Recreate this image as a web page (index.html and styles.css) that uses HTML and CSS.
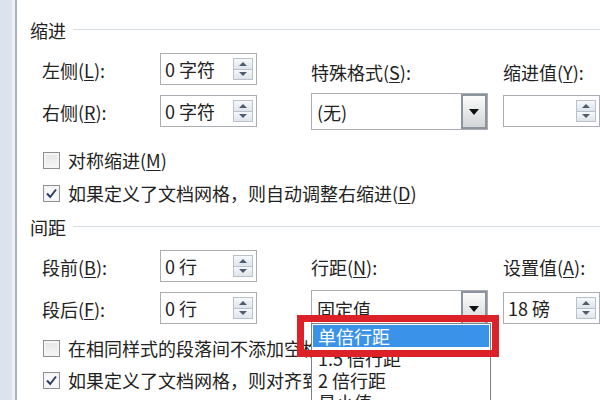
FILE: index.html
```html
<!DOCTYPE html>
<html lang="zh-CN">
<head>
<meta charset="utf-8">
<title>段落</title>
<link rel="stylesheet" href="styles.css">
</head>
<body>
<div class="window">
  <div class="edge"></div>
  <div class="content">
    <section class="group">
      <div class="group-title"><span>缩进</span><i class="rule"></i></div>
      <div class="fields">
        <label class="lbl c1">左侧(<u>L</u>):</label>
        <div class="spin c2"><span class="val">0 字符</span><span class="arrows"><b class="up"></b><b class="down"></b></span></div>
        <label class="lbl c4 top">特殊格式(<u>S</u>):</label>
        <label class="lbl c6 top">缩进值(<u>Y</u>):</label>
        <label class="lbl c1">右侧(<u>R</u>):</label>
        <div class="spin c2"><span class="val">0 字符</span><span class="arrows"><b class="up"></b><b class="down"></b></span></div>
        <div class="combo c4"><span class="val">(无)</span><span class="drop"><b></b></span></div>
        <div class="spin c6"><span class="val"></span><span class="arrows"><b class="up"></b><b class="down"></b></span></div>
      </div>
      <div class="checks first">
        <div class="check"><span class="box"></span><span>对称缩进(<u>M</u>)</span></div>
        <div class="check"><span class="box on"><svg viewBox="0 0 15 15" width="15" height="15"><path d="M3 7.5 L6.2 11 L12 3.5" fill="none" stroke="#2f3f63" stroke-width="2"/></svg></span><span>如果定义了文档网格，则自动调整右缩进(<u>D</u>)</span></div>
      </div>
    </section>
    <section class="group second">
      <div class="group-title"><span>间距</span><i class="rule"></i></div>
      <div class="fields">
        <label class="lbl c1">段前(<u>B</u>):</label>
        <div class="spin c2"><span class="val">0 行</span><span class="arrows"><b class="up"></b><b class="down"></b></span></div>
        <label class="lbl c4">行距(<u>N</u>):</label>
        <label class="lbl c6">设置值(<u>A</u>):</label>
        <label class="lbl c1">段后(<u>F</u>):</label>
        <div class="spin c2"><span class="val">0 行</span><span class="arrows"><b class="up"></b><b class="down"></b></span></div>
        <div class="combo c4"><span class="val">固定值</span><span class="drop"><b></b></span></div>
        <div class="spin c6"><span class="val">18 磅</span><span class="arrows"><b class="up"></b><b class="down"></b></span></div>
      </div>
      <div class="checks">
        <div class="check"><span class="box"></span><span>在相同样式的段落间不添加空格(<u>C</u>)</span></div>
        <div class="check"><span class="box on"><svg viewBox="0 0 15 15" width="15" height="15"><path d="M3 7.5 L6.2 11 L12 3.5" fill="none" stroke="#2f3f63" stroke-width="2"/></svg></span><span>如果定义了文档网格，则对齐到网格(<u>W</u>)</span></div>
      </div>
    </section>
  </div>
  <ul class="listbox">
    <li class="sel">单倍行距</li>
    <li>1.5 倍行距</li>
    <li>2 倍行距</li>
    <li>最小值</li>
    <li>固定值</li>
  </ul>
  <div class="mark"></div>
</div>
</body>
</html>
```
FILE: styles.css
```css
html, body {
  margin: 0;
  padding: 0;
  background: #fff;
}
body {
  width: 600px;
  height: 400px;
  overflow: hidden;
  font-family: "Noto Sans CJK SC", "Microsoft YaHei", sans-serif;
  font-size: 18px;
  color: #222;
}
u { text-decoration: underline; text-underline-offset: 2px; text-decoration-thickness: 1px; }

.window {
  position: relative;
  display: flex;
  width: 600px;
  height: 400px;
  overflow: hidden;
}
.edge {
  width: 15px;
  flex: none;
  background: #dbe3ed;
  box-shadow: inset -3px 0 0 #eef2f7;
  border-right: 2px solid #aab2bc;
}
.content {
  flex: 1;
  padding: 20px 0 0 13px;
  min-width: 0;
}

.group-title {
  display: flex;
  align-items: center;
  height: 20px;
  line-height: 20px;
  white-space: nowrap;
}
.group-title .rule {
  flex: 1;
  height: 1px;
  margin: -2px 0 0 7px;
  background: #d6dce3;
}
.second { margin-top: 12px; }

.fields {
  display: grid;
  margin: 13px 0 0 12px;
  grid-template-columns: 118px 97px 54px 177px 15px 97px;
  grid-template-rows: 32px 32px;
  row-gap: 10px;
  align-items: center;
}
.c1 { grid-column: 1; }
.c2 { grid-column: 2; }
.c4 { grid-column: 4; }
.c6 { grid-column: 6; }
.lbl {
  white-space: nowrap;
  line-height: 24px;
  padding-top: 2px;
}
.lbl.top { padding-top: 5px; }

.spin {
  box-sizing: border-box;
  height: 32px;
  border: 1px solid #abadb3;
  display: flex;
  align-items: center;
  justify-content: space-between;
  padding: 0 3px 0 4px;
  white-space: nowrap;
}
.arrows {
  display: flex;
  flex-direction: column;
  width: 20px;
  height: 22px;
}
.arrows b {
  flex: 1;
  box-sizing: border-box;
  border: 1px solid #b9c1cc;
  background: linear-gradient(#f6f8fb, #dfe5ec);
  display: flex;
  align-items: center;
  justify-content: center;
}
.arrows b + b { border-top: none; }
.arrows b::after {
  content: "";
  width: 0;
  height: 0;
  border-left: 4px solid transparent;
  border-right: 4px solid transparent;
}
.arrows .up::after { border-bottom: 4px solid #4f5c6c; }
.arrows .down::after { border-top: 4px solid #4f5c6c; }

.combo {
  box-sizing: border-box;
  align-self: start;
  margin-top: -2px;
  height: 37px;
  border: 1px solid #abadb3;
  display: flex;
  align-items: center;
  justify-content: space-between;
  padding-left: 5px;
}
.combo .drop {
  box-sizing: border-box;
  width: 26px;
  height: 35px;
  border: 2px solid #8b949d;
  background: linear-gradient(#fbfbfb, #d3d5d7);
  display: flex;
  align-items: center;
  justify-content: center;
}
.combo .drop b {
  width: 0;
  height: 0;
  border-left: 5px solid transparent;
  border-right: 5px solid transparent;
  border-top: 6px solid #111;
}

.checks {
  display: flex;
  flex-direction: column;
  gap: 8px;
  margin: 12px 0 0 13px;
}
.checks.first { margin-top: 21px; gap: 9px; }
.check {
  display: flex;
  align-items: center;
  height: 24px;
  gap: 8px;
  white-space: nowrap;
}
.box {
  box-sizing: border-box;
  width: 17px;
  height: 17px;
  flex: none;
  border: 1px solid #8e9094;
  background: linear-gradient(#e4e4e4, #f6f6f6);
  box-shadow: inset 0 0 0 2px #f4f4f4;
  display: flex;
  align-items: center;
  justify-content: center;
}
.box.on { background: #f7f8fa; }

.listbox {
  position: absolute;
  left: 311px;
  top: 323px;
  width: 180px;
  height: 100px;
  box-sizing: border-box;
  margin: 0;
  padding: 1px;
  list-style: none;
  border: 1px solid #7d828a;
  background: #fff;
}
.listbox li {
  height: 22px;
  line-height: 22px;
  padding-left: 5px;
  white-space: nowrap;
}
.listbox li.sel {
  background: #3b93e9;
  color: #fff;
}
.mark {
  position: absolute;
  left: 297px;
  top: 315px;
  width: 202px;
  height: 42px;
  box-sizing: border-box;
  border: 7px solid #dc2129;
}
```
